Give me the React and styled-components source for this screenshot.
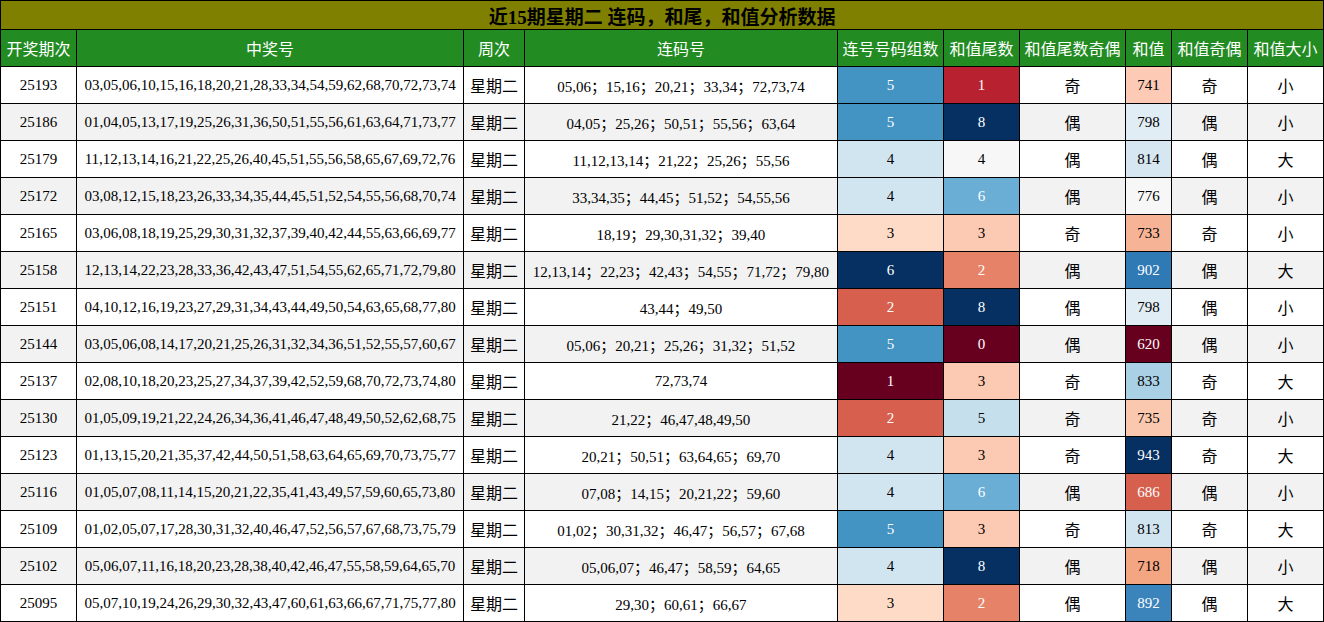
import React from 'react';
import styled, { createGlobalStyle } from 'styled-components';

const Global = createGlobalStyle`
  body { margin: 0; background: #fff; }
`;

const COLS = [76, 387, 61, 313, 106, 76, 106, 46, 76, 76];
const HEAD = ['开奖期次', '中奖号', '周次', '连码号', '连号号码组数', '和值尾数', '和值尾数奇偶', '和值', '和值奇偶', '和值大小'];

const ROWS = [
  ['25193', '03,05,06,10,15,16,18,20,21,28,33,34,54,59,62,68,70,72,73,74', '05,06；15,16；20,21；33,34；72,73,74', 5, '1', '奇', '741', '奇', '小', '#4393c3', '#b8212f', '#fccab5'],
  ['25186', '01,04,05,13,17,19,25,26,31,36,50,51,55,56,61,63,64,71,73,77', '04,05；25,26；50,51；55,56；63,64', 5, '8', '偶', '798', '偶', '小', '#4393c3', '#053061', '#e1edf5'],
  ['25179', '11,12,13,14,16,21,22,25,26,40,45,51,55,56,58,65,67,69,72,76', '11,12,13,14；21,22；25,26；55,56', 4, '4', '偶', '814', '偶', '大', '#d1e5f0', '#f7f7f7', '#d6e7f1'],
  ['25172', '03,08,12,15,18,23,26,33,34,35,44,45,51,52,54,55,56,68,70,74', '33,34,35；44,45；51,52；54,55,56', 4, '6', '偶', '776', '偶', '小', '#d1e5f0', '#6aaed6', '#f7f7f7'],
  ['25165', '03,06,08,18,19,25,29,30,31,32,37,39,40,42,44,55,63,66,69,77', '18,19；29,30,31,32；39,40', 3, '3', '奇', '733', '奇', '小', '#fddbc7', '#fcc9b3', '#f6b396'],
  ['25158', '12,13,14,22,23,28,33,36,42,43,47,51,54,55,62,65,71,72,79,80', '12,13,14；22,23；42,43；54,55；71,72；79,80', 6, '2', '偶', '902', '偶', '大', '#053061', '#e58267', '#2f79b5'],
  ['25151', '04,10,12,16,19,23,27,29,31,34,43,44,49,50,54,63,65,68,77,80', '43,44；49,50', 2, '8', '偶', '798', '偶', '小', '#d6604d', '#053061', '#e1edf5'],
  ['25144', '03,05,06,08,14,17,20,21,25,26,31,32,34,36,51,52,55,57,60,67', '05,06；20,21；25,26；31,32；51,52', 5, '0', '偶', '620', '偶', '小', '#4393c3', '#67001f', '#67001f'],
  ['25137', '02,08,10,18,20,23,25,27,34,37,39,42,52,59,68,70,72,73,74,80', '72,73,74', 1, '3', '奇', '833', '奇', '大', '#67001f', '#fcc9b3', '#a9d0e5'],
  ['25130', '01,05,09,19,21,22,24,26,34,36,41,46,47,48,49,50,52,62,68,75', '21,22；46,47,48,49,50', 2, '5', '奇', '735', '奇', '小', '#d6604d', '#c5dfed', '#fac8af'],
  ['25123', '01,13,15,20,21,35,37,42,44,50,51,58,63,64,65,69,70,73,75,77', '20,21；50,51；63,64,65；69,70', 4, '3', '奇', '943', '奇', '大', '#d1e5f0', '#fcc9b3', '#053061'],
  ['25116', '01,05,07,08,11,14,15,20,21,22,35,41,43,49,57,59,60,65,73,80', '07,08；14,15；20,21,22；59,60', 4, '6', '偶', '686', '偶', '小', '#d1e5f0', '#6aaed6', '#d6604d'],
  ['25109', '01,02,05,07,17,28,30,31,32,40,46,47,52,56,57,67,68,73,75,79', '01,02；30,31,32；46,47；56,57；67,68', 5, '3', '奇', '813', '奇', '大', '#4393c3', '#fcc9b3', '#d1e5f0'],
  ['25102', '05,06,07,11,16,18,20,23,28,38,40,42,46,47,55,58,59,64,65,70', '05,06,07；46,47；58,59；64,65', 4, '8', '偶', '718', '偶', '小', '#d1e5f0', '#053061', '#f4a582'],
  ['25095', '05,07,10,19,24,26,29,30,32,43,47,60,61,63,66,67,71,75,77,80', '29,30；60,61；66,67', 3, '2', '偶', '892', '偶', '大', '#fddbc7', '#e58267', '#3a84bb'],
];

const DARK = ['#053061', '#67001f', '#b8212f', '#d6604d', '#2f79b5', '#3a84bb', '#4393c3', '#6aaed6', '#e58267'];

const Table = styled.table`
  border-collapse: collapse;
  table-layout: fixed;
  width: 1324px;
  font-family: "Liberation Serif", "Noto Sans CJK SC", serif;
`;

const Title = styled.th`
  height: 28px;
  background: #808000;
  border: 1px solid #000;
  font-family: "Liberation Serif", "Noto Sans CJK SC", serif;
  font-size: 19px;
  font-weight: bold;
  color: #000;
  padding: 0;
`;

const Head = styled.th`
  height: 36px;
  background: #228b22;
  color: #fff;
  border: 1px solid #000;
  font-family: "Noto Sans CJK SC", sans-serif;
  font-size: 16px;
  font-weight: normal;
  padding: 0;
  white-space: nowrap;
`;

const Row = styled.tr`
  background: ${p => (p.$alt ? '#f2f2f2' : '#fff')};
`;

const Cell = styled.td`
  height: 36px;
  border: 1px solid #000;
  text-align: center;
  padding: 0;
  font-size: ${p => (p.$cjk ? '16px' : '15px')};
  font-family: ${p => (p.$cjk ? '"Noto Sans CJK SC", sans-serif' : '"Liberation Serif", "Noto Sans CJK SC", serif')};
  color: ${p => (p.$bg && DARK.includes(p.$bg) ? '#fff' : '#000')};
  background: ${p => p.$bg || 'transparent'};
  white-space: nowrap;
  overflow: hidden;
`;

export default function App() {
  return (
    <>
      <Global />
      <Table>
        <colgroup>
          {COLS.map((w, i) => <col key={i} style={{ width: w }} />)}
        </colgroup>
        <thead>
          <tr><Title colSpan={10}>近15期星期二 连码，和尾，和值分析数据</Title></tr>
          <tr>{HEAD.map(h => <Head key={h}>{h}</Head>)}</tr>
        </thead>
        <tbody>
          {ROWS.map((r, i) => (
            <Row key={r[0]} $alt={i % 2 === 1}>
              <Cell>{r[0]}</Cell>
              <Cell>{r[1]}</Cell>
              <Cell $cjk>星期二</Cell>
              <Cell>{r[2]}</Cell>
              <Cell $bg={r[9]}>{r[3]}</Cell>
              <Cell $bg={r[10]}>{r[4]}</Cell>
              <Cell $cjk>{r[5]}</Cell>
              <Cell $bg={r[11]}>{r[6]}</Cell>
              <Cell $cjk>{r[7]}</Cell>
              <Cell $cjk>{r[8]}</Cell>
            </Row>
          ))}
        </tbody>
      </Table>
    </>
  );
}
